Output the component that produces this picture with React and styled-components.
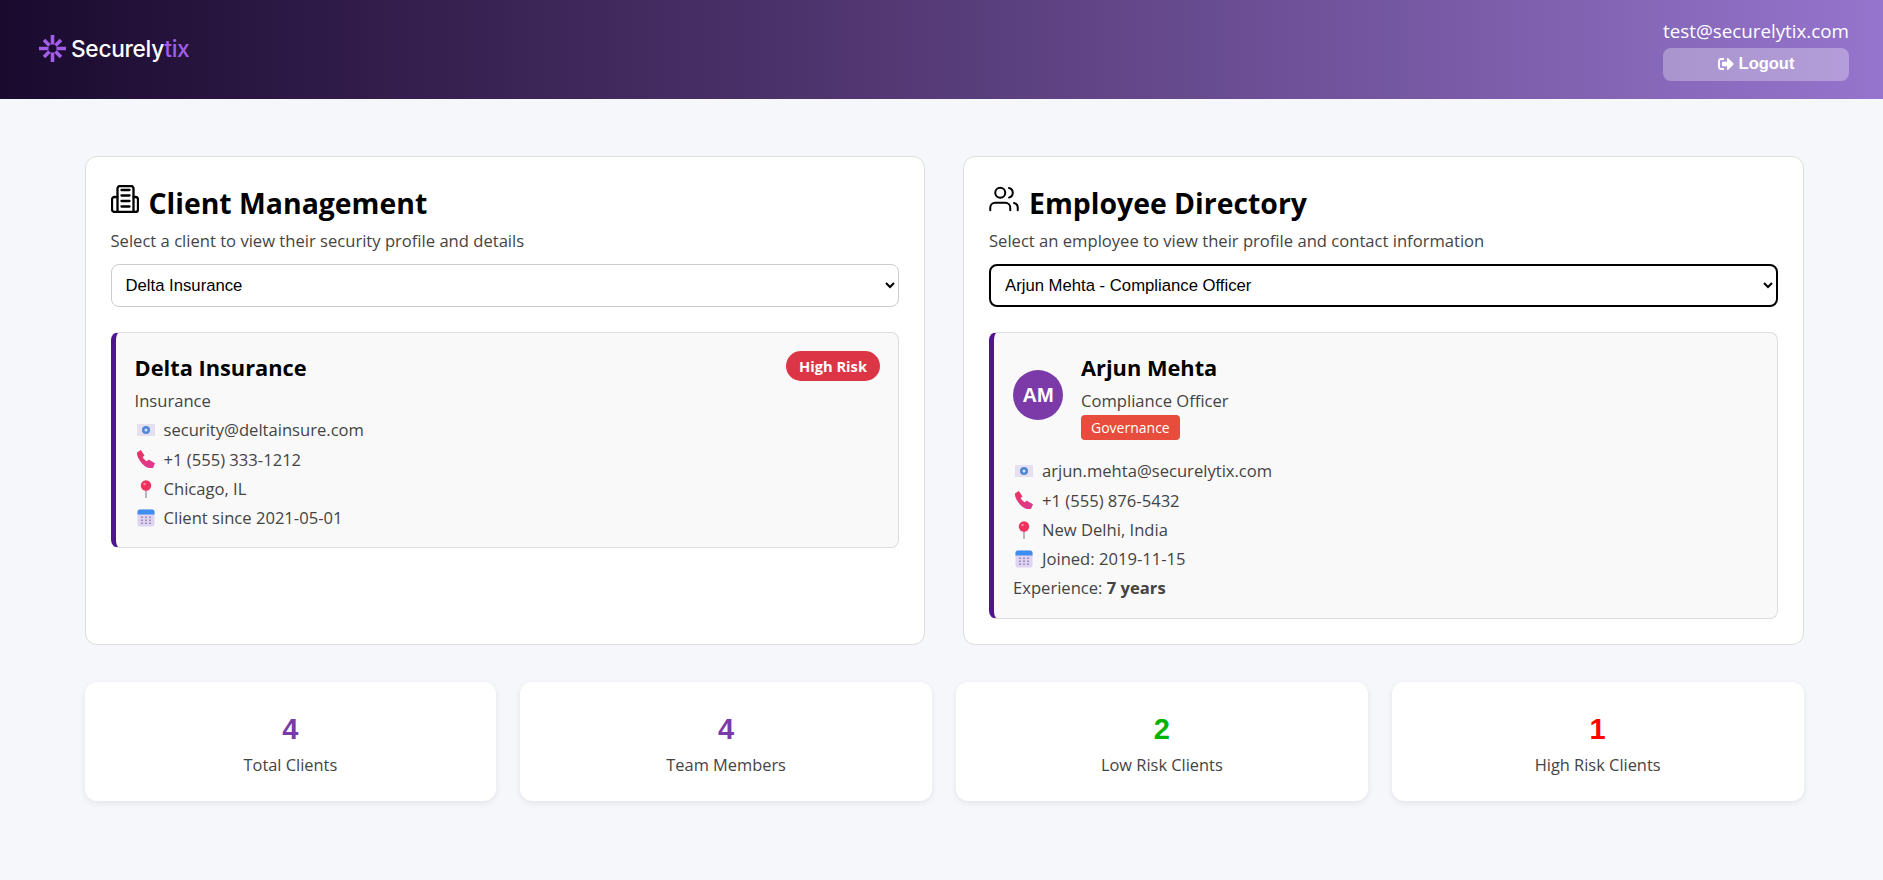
import React from 'react';
import styled, { createGlobalStyle } from 'styled-components';
import { FaSignOutAlt } from 'react-icons/fa';
import { FiUsers } from 'react-icons/fi';

const Global = createGlobalStyle`
  html, body { margin: 0; padding: 0; }
  body { background: #f5f7fb; font-family: "Open Sans", sans-serif; color: #333; }
  * { box-sizing: border-box; }
`;
const Page = styled.div`min-height: 880px; display: flex; flex-direction: column;`;
const Header = styled.header`
  height: 99px; display: flex; align-items: center; justify-content: space-between;
  padding: 0 34px 0 39px; color: #fff;
  background: linear-gradient(90deg, #1a0a2e 0%, #4a3068 40%, #9575cd 100%);
`;
const Logo = styled.div`display: flex; align-items: center; gap: 5px; margin-top: -3px; font-family: Inter, sans-serif; font-size: 22.7px; font-weight: 500; letter-spacing: -0.3px;`;
const Tix = styled.span`color: #a25ee8;`;
const UserBox = styled.div`width: 186px; display: flex; flex-direction: column; gap: 5px; align-items: flex-start; margin-top: 1px;`;
const Email = styled.div`font-size: 18.8px; line-height: 24px; white-space: nowrap;`;
const LogoutBtn = styled.button`
  width: 186px; height: 33px; border: 0; border-radius: 8px; color: #fff; padding: 0 0 2px;
  background: rgba(255,255,255,0.3); font: 700 16.500px "Liberation Sans", sans-serif;
  display: flex; align-items: center; justify-content: center; gap: 5px;
`;
const Main = styled.main`padding: 57px 79.500px 0 84.500px; display: flex; flex-direction: column; gap: 37px;`;
const Columns = styled.div`display: grid; grid-template-columns: 1fr 1fr; gap: 38px;`;
const Panel = styled.section`
  height: 489px; background: #fff; border: 1px solid #ddd; border-radius: 12px; padding: 24px 25px;
`;
const Title = styled.h2`margin: 0; display: flex; align-items: center; gap: 10px; color: #000; font-size: 28.4px; font-weight: 700; line-height: 44px; height: 44px;`;
const TitleIcon = styled.span`display: flex; margin-bottom: 8px;`;
const Sub = styled.p`margin: 4px 0 0; font-size: 16.6px; line-height: 24px; color: #444; white-space: nowrap;`;
const Select = styled.select`
  display: block; width: 100%; height: 43px; margin-top: 11px; padding: 0 10px; background: #fff; color: #000;
  font: 16.700px "Liberation Sans", sans-serif; border-radius: 8px;
  border: ${p => p.$focus ? '2px solid #000' : '1px solid #ccc'};
`;
const Detail = styled.div`
  position: relative; margin-top: 25px; background: #f9f9f9; border: 1px solid #ddd; border-left: 5px solid #4f1490;
  border-radius: 8px; padding: 16px 18px 15px 19px;
`;
const Name = styled.h3`margin: 0; color: #000; font-size: 21.8px; font-weight: 700; line-height: 37px;`;
const Line = styled.div`display: flex; align-items: center; gap: 9px; font-size: 16.6px; line-height: 29.3px; color: #444;`;
const EmojiBox = styled.span`display: flex; margin-left: 2px;`;
const Risk = styled.span`
  position: absolute; top: 18px; right: 18px; height: 30px; padding: 0 13px; border-radius: 15px; background: #dc3545; color: #fff;
  font-size: 14.7px; font-weight: 700; display: flex; align-items: center;
`;
const Person = styled.div`display: flex; align-items: center; gap: 18px; margin-bottom: 16px;`;
const Avatar = styled.div`
  width: 50px; height: 50px; margin-top: 1px; border-radius: 50%; background: #7b3aa8; color: #fff; display: flex; align-items: center; justify-content: center;
  font: 700 20px "Liberation Sans", sans-serif;
`;
const Dept = styled.span`display: block; width: fit-content; height: 25px; line-height: 25px; padding: 0 10px; background: #e74c3c; color: #fff; border-radius: 4px; font-size: 14px;`;
const Stats = styled.div`display: grid; grid-template-columns: repeat(4, 1fr); gap: 24px;`;
const Stat = styled.div`
  height: 119px; background: #fff; border-radius: 12px; box-shadow: 0 2px 6px rgba(0,0,0,0.08);
  display: flex; flex-direction: column; align-items: center; padding-top: 30px;
`;
const Num = styled.div`font: 700 29px/34px "Liberation Sans", sans-serif; color: ${p => p.$c};`;
const Label = styled.div`font-size: 16.4px; line-height: 24px; margin-top: 7px; color: #444;`;

const LogoMark = () => (
  <svg width="27" height="27" viewBox="0 0 27 27" stroke="#a25ee8" strokeWidth="3.600" fill="none">
    <path d="M13.500 0v9.500M13.500 27v-9.500M0 13.500h9.500M27 13.500h-9.500" />
    <path d="M5 5l5.500 5.500M22 5l-5.500 5.500M5 22l5.500-5.500M22 22l-5.500-5.500" />
  </svg>
);
const Building = () => (
  <svg width="28" height="28" viewBox="0 0 28 28" fill="none" stroke="#000" strokeWidth="2.300" strokeLinecap="round" strokeLinejoin="round">
    <path d="M6.500 27V3.500A2.500 2.500 0 0 1 9 1h11a2.500 2.500 0 0 1 2.500 2.500V27" />
    <path d="M6.500 12H3.500A2.500 2.500 0 0 0 1 14.500V24.500A2.500 2.500 0 0 0 3.500 27h21a2.500 2.500 0 0 0 2.500-2.500V14.500A2.500 2.500 0 0 0 24.500 12h-2" />
    <path d="M10.500 5h8M10.500 10.500h8M10.500 16h8M10.500 21.500h8" />
  </svg>
);
const Mail = () => (
  <svg width="18" height="18" viewBox="0 0 18 18">
    <rect x="0" y="3" width="18" height="12" fill="#e6dff0" />
    <circle cx="9" cy="9" r="4" fill="#4f86d6" />
    <circle cx="9" cy="9" r="1.500" fill="#d7e4f7" />
  </svg>
);
const Phone = () => (
  <svg width="18" height="18" viewBox="0 0 18 18">
    <defs>
      <linearGradient id="phoneFill" x1="0" y1="0" x2="1" y2="1">
        <stop offset="0" stopColor="#e8335f" />
        <stop offset="1" stopColor="#dd3a9a" />
      </linearGradient>
    </defs>
    <path d="M0 2.500L3.800 0l3.700 5.500-1.800 1.500c.9 2 2.400 3.500 4.300 4.300l1.500-1.800 6.500 3.700-2 4.800c-3.500.8-7-.5-10-3.500S-.5 6 0 2.500z" fill="url(#phoneFill)" />
  </svg>
);
const Pin = () => (
  <svg width="18" height="18" viewBox="0 0 18 18">
    <rect x="8.200" y="8" width="1.600" height="10" fill="#a9a4b5" />
    <circle cx="9" cy="5.500" r="5.200" fill="#f0325f" />
    <circle cx="7.500" cy="4" r="1.300" fill="#f98aa5" />
  </svg>
);
const Calendar = () => (
  <svg width="18" height="18" viewBox="0 0 18 18">
    <rect x="0.500" y="0.500" width="17" height="17" rx="2.500" fill="#ded3f0" />
    <path d="M.5 5.500V3A2.500 2.500 0 0 1 3 .5h12A2.500 2.500 0 0 1 17.500 3v2.500z" fill="#3e8df0" />
    <path d="M4 7.500h2V9H4zM8 7.500h2V9H8zM12 7.500h2V9h-2zM4 10.500h2V12H4zM8 10.500h2V12H8zM12 10.500h2V12h-2zM4 13.500h2V15H4zM8 13.500h2V15H8zM12 13.500h2V15h-2z" fill="#9c91b8" />
  </svg>
);

const Contact = ({ Icon, children }) => <Line><EmojiBox><Icon /></EmojiBox>{children}</Line>;

const stats = [
  ['4', 'Total Clients', '#7b3aa8'],
  ['4', 'Team Members', '#7b3aa8'],
  ['2', 'Low Risk Clients', '#00b300'],
  ['1', 'High Risk Clients', '#ff0000'],
];

export default function App() {
  return (
    <Page>
      <Global />
      <Header>
        <Logo><LogoMark /><span>Securely<Tix>tix</Tix></span></Logo>
        <UserBox>
          <Email>test@securelytix.com</Email>
          <LogoutBtn><FaSignOutAlt size={16} />Logout</LogoutBtn>
        </UserBox>
      </Header>
      <Main>
        <Columns>
          <Panel>
            <Title><TitleIcon><Building /></TitleIcon>Client Management</Title>
            <Sub>Select a client to view their security profile and details</Sub>
            <Select defaultValue="d"><option value="d">Delta Insurance</option></Select>
            <Detail>
              <Name>Delta Insurance</Name>
              <Risk>High Risk</Risk>
              <Line>Insurance</Line>
              <Contact Icon={Mail}>security@deltainsure.com</Contact>
              <Contact Icon={Phone}>+1 (555) 333-1212</Contact>
              <Contact Icon={Pin}>Chicago, IL</Contact>
              <Contact Icon={Calendar}>Client since 2021-05-01</Contact>
            </Detail>
          </Panel>
          <Panel>
            <Title><TitleIcon><FiUsers size={30} strokeWidth={1.600} /></TitleIcon>Employee Directory</Title>
            <Sub>Select an employee to view their profile and contact information</Sub>
            <Select $focus defaultValue="a"><option value="a">Arjun Mehta - Compliance Officer</option></Select>
            <Detail>
              <Person>
                <Avatar>AM</Avatar>
                <div>
                  <Name>Arjun Mehta</Name>
                  <Line>Compliance Officer</Line>
                  <Dept>Governance</Dept>
                </div>
              </Person>
              <Contact Icon={Mail}>arjun.mehta@securelytix.com</Contact>
              <Contact Icon={Phone}>+1 (555) 876-5432</Contact>
              <Contact Icon={Pin}>New Delhi, India</Contact>
              <Contact Icon={Calendar}>Joined: 2019-11-15</Contact>
              <Line><span>Experience: <b>7 years</b></span></Line>
            </Detail>
          </Panel>
        </Columns>
        <Stats>
          {stats.map(([n, l, c]) => (
            <Stat key={l}><Num $c={c}>{n}</Num><Label>{l}</Label></Stat>
          ))}
        </Stats>
      </Main>
    </Page>
  );
}
